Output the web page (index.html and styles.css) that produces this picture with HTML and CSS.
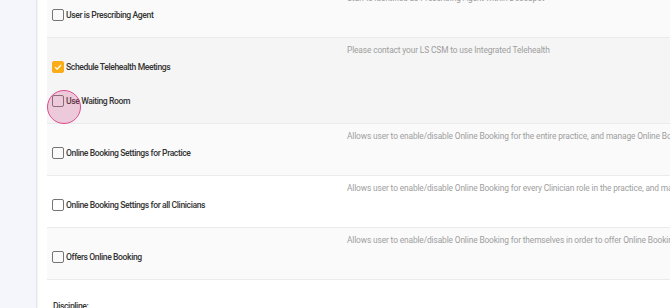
FILE: index.html
```html
<!DOCTYPE html>
<html lang="en">
<head>
    <meta charset="UTF-8">
    <meta name="viewport" content="width=device-width, initial-scale=1.0">
    <title>Staff Permissions</title>
    <link rel="stylesheet" href="styles.css">
</head>
<body>

    <!-- Left navigation strip -->
    <aside class="sidebar"></aside>

    <!-- Permissions panel -->
    <main class="content">
        <div class="perm-list">

            <div class="perm-row">
                <div class="perm-options">
                    <label class="perm-option">
                        <span class="checkbox"></span>
                        <span>User is Prescribing Agent</span>
                    </label>
                </div>
                <div class="perm-desc">Staff is identified as Prescribing Agent within DoseSpot</div>
            </div>

            <div class="perm-row hovered">
                <div class="perm-options">
                    <label class="perm-option">
                        <span class="checkbox checked">
                            <svg viewBox="0 0 12 12" width="12" height="12"><polyline points="2.5,6.2 5,8.6 9.6,3.6" fill="none" stroke="#fff" stroke-width="1.5"/></svg>
                        </span>
                        <span>Schedule Telehealth Meetings</span>
                    </label>
                    <label class="perm-option">
                        <span class="checkbox focused"><span class="ripple"></span></span>
                        <span>Use Waiting Room</span>
                    </label>
                </div>
                <div class="perm-desc">Please contact your LS CSM to use Integrated Telehealth</div>
            </div>

            <div class="perm-row">
                <div class="perm-options">
                    <label class="perm-option">
                        <span class="checkbox"></span>
                        <span>Online Booking Settings for Practice</span>
                    </label>
                </div>
                <div class="perm-desc">Allows user to enable/disable Online Booking for the entire practice, and manage Online Booking settings</div>
            </div>

            <div class="perm-row">
                <div class="perm-options">
                    <label class="perm-option">
                        <span class="checkbox"></span>
                        <span>Online Booking Settings for all Clinicians</span>
                    </label>
                </div>
                <div class="perm-desc">Allows user to enable/disable Online Booking for every Clinician role in the practice, and manage their settings</div>
            </div>

            <div class="perm-row">
                <div class="perm-options">
                    <label class="perm-option">
                        <span class="checkbox"></span>
                        <span>Offers Online Booking</span>
                    </label>
                </div>
                <div class="perm-desc">Allows user to enable/disable Online Booking for themselves in order to offer Online Booking to their clients</div>
            </div>

        </div>

        <div class="field-label">Discipline:</div>
    </main>

</body>
</html>
```

FILE: styles.css
```css
/* Staff permissions panel */
body {
    font-family: Roboto, 'Liberation Sans', sans-serif;
    margin: 0;
    height: 308px;
    display: flex;
    overflow: hidden;
    background-color: #fff;
}

.sidebar {
    width: 36px;
    flex-shrink: 0;
    background-color: #f4f6fb;
    border-right: 1px solid #e4e6eb;
    box-shadow: 1px 0 2px rgba(0, 0, 0, 0.06);
}

.content {
    flex: 1;
    min-width: 0;
    padding-left: 10px;
    white-space: nowrap;
    overflow: hidden;
}

.perm-list {
    margin-top: -14px;
}

.perm-row {
    display: flex;
    background-color: #fafafa;
    border-bottom: 1px solid #ebebeb;
}

.perm-row:nth-child(even) {
    background-color: #fff;
}

.perm-row.hovered {
    background-color: #f5f5f5;
}

.perm-options {
    width: 295px;
    flex-shrink: 0;
    padding: 12px 0 5px 5px;
}

.perm-option {
    height: 34px;
    display: flex;
    align-items: center;
    gap: 2px;
    font-size: 8.6px;
    font-weight: 500;
    letter-spacing: -0.4px;
    color: #333;
}

.checkbox {
    position: relative;
    width: 10px;
    height: 10px;
    border: 1.5px solid #757575;
    border-radius: 2px;
    display: flex;
    align-items: center;
    justify-content: center;
}

.checkbox.checked {
    background-color: #fbad18;
    border-color: #fbad18;
}

.ripple {
    position: absolute;
    left: -6px;
    top: -6px;
    width: 32px;
    height: 32px;
    border: 1px solid #dd4c91;
    border-radius: 50%;
    background-color: rgba(214, 80, 140, 0.26);
}

.perm-desc {
    padding-top: 6px;
    font-size: 8.4px;
    letter-spacing: -0.14px;
    line-height: 12px;
    color: #9e9e9e;
}

.field-label {
    margin-top: 21px;
    padding-left: 6px;
    font-size: 8.6px;
    font-weight: 500;
    letter-spacing: -0.4px;
    color: #333;
}
```
